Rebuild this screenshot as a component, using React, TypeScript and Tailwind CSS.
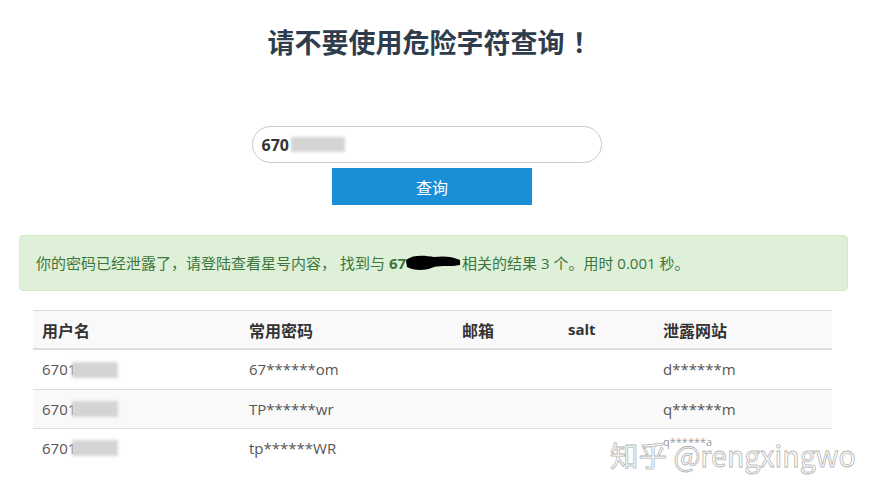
const cols = 'grid grid-cols-[207px_213px_106px_95px_178px]';

const rows = [
  { user: '6701', pwd: '67******om', site: 'd******m' },
  { user: '6701', pwd: 'TP******wr', site: 'q******m' },
  { user: '6701', pwd: 'tp******WR', site: 'q******a' },
];

function Blur({ className }: { className: string }) {
  // mosaic left by the screenshot author
  return <span className={`inline-block bg-[#d4d4d4] blur-[1.5px] ${className}`} />;
}

export default function App() {
  return (
    <div className="relative w-[878px] h-[496px] overflow-hidden bg-white font-['Open_Sans','Noto_Sans_CJK_SC',sans-serif]">
      <div className="ml-[19px] w-[829px] pt-[23px]">
        <h1 className="text-center text-[27px] leading-[38px] font-bold text-[#2e3d4d] font-['Noto_Sans_CJK_SC',sans-serif]">
          请不要使用危险字符查询<span className="ml-[8px]">！</span>
        </h1>

        <div className="mt-[65px] flex flex-col items-center">
          <div className="ml-[-14px] w-[350px] h-[37px] rounded-full border border-[#c8c8c8] flex items-center px-[9px]">
            <span className="text-[16px] font-bold text-[#333]">670</span>
            <Blur className="ml-[2px] w-[54px] h-[15px]" />
          </div>
          <button className="mt-[5px] ml-[-3px] w-[200px] h-[37px] bg-[#1a8ed6] text-white text-[16px] font-['Noto_Sans_CJK_SC',sans-serif]">
            查询
          </button>
        </div>

        <div className="mt-[30px] h-[56px] rounded-[4px] border border-[#d3e8c5] bg-[#dff0d8] flex items-center pl-[16px] text-[15px] text-[#3c763d]">
          <span>你的密码已经泄露了，请登陆查看星号内容， 找到与 </span>
          <b className="ml-[4px]">67</b>
          <svg width="58" height="18" viewBox="0 0 58 18" className="ml-[-2px]">
            <path d="M2 6 C10 0 22 2 30 3 C38 2 48 2 56 6 L56 11 C46 13 38 11 30 13 C22 17 10 17 3 13 Z" fill="#000" />
          </svg>
          <span>相关的结果 3 个。用时 0.001 秒。</span>
        </div>

        <div className="mt-[19px] ml-[14px] w-[799px] text-[15px]">
          <div className={`${cols} h-[40px] items-center bg-[#f9f9f9] border-t border-b-2 border-[#dddddd] text-[16px] font-bold text-[#333] font-['Noto_Sans_CJK_SC',sans-serif]`}>
            <div className="pl-[9px]">用户名</div>
            <div className="pl-[9px]">常用密码</div>
            <div className="pl-[9px]">邮箱</div>
            <div className="pl-[9px] font-['Open_Sans',sans-serif] text-[15px]">salt</div>
            <div className="pl-[9px]">泄露网站</div>
          </div>
          {rows.map((r, i) => (
            <div
              key={i}
              className={`${cols} h-[39px] items-center text-[#555] ${i > 0 ? 'border-t border-[#dddddd]' : ''} ${i === 1 ? 'bg-[#f9f9f9]' : ''}`}
            >
              <div className="pl-[9px] flex items-center">
                <span>{r.user}</span>
                <Blur className="ml-[-4px] w-[46px] h-[16px]" />
              </div>
              <div className="pl-[9px]">{r.pwd}</div>
              <div />
              <div />
              <div className={`pl-[9px] ${i === 2 ? 'text-[11px] text-[#999] -mt-[12px]' : ''}`}>{r.site}</div>
            </div>
          ))}
        </div>
      </div>

      <div className="absolute left-[610px] top-[436px] text-[28.5px] leading-[38px] text-white [-webkit-text-stroke:0.8px_#b5b5b5] font-['Noto_Sans_CJK_SC',sans-serif]">
        知乎 @rengxingwo
      </div>
    </div>
  );
}
